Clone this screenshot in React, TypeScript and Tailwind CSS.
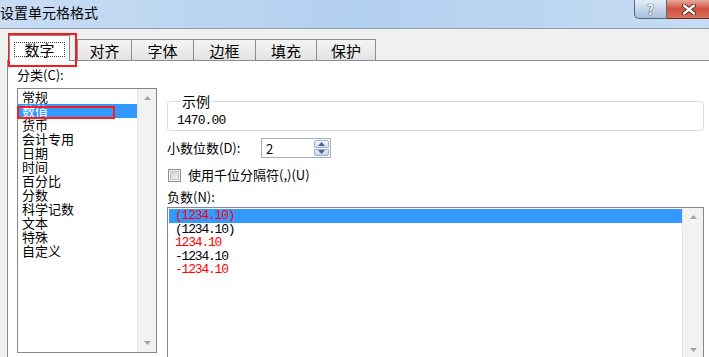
const FONT = "font-['Noto_Sans_CJK_SC','Liberation_Sans',sans-serif]";
const MONO = "font-['Liberation_Mono','Noto_Sans_CJK_SC',monospace]";

const categories = ["常规", "数值", "货币", "会计专用", "日期", "时间", "百分比", "分数", "科学记数", "文本", "特殊", "自定义"];

const negatives = [
  { text: "(1234.10)", red: true },
  { text: "(1234.10)", red: false },
  { text: "1234.10", red: true },
  { text: "-1234.10", red: false },
  { text: "-1234.10", red: true },
];

const tabs = [
  { label: "对齐", w: "w-[54px]" },
  { label: "字体", w: "w-[62px]" },
  { label: "边框", w: "w-[62px]" },
  { label: "填充", w: "w-[61px]" },
  { label: "保护", w: "w-[60px]" },
];

function Arrow({ up }: { up?: boolean }) {
  return (
    <svg width="7" height="4" viewBox="0 0 7 4" className="block">
      <path d={up ? "M0 4 L3.5 0 L7 4 Z" : "M0 0 L3.5 4 L7 0 Z"} fill="#a3a3a3" />
    </svg>
  );
}

function ScrollBar({ w }: { w: string }) {
  return (
    <div className={`${w} flex flex-col items-center justify-between border-l border-[#e6e6e6] bg-[#f2f2f2] py-[7px]`}>
      <Arrow up />
      <Arrow />
    </div>
  );
}

export default function App() {
  return (
    <div className={`relative flex h-[357px] w-[709px] flex-col overflow-hidden bg-[#f0f0f0] text-black ${FONT}`}>
      {/* title bar */}
      <div className="flex h-[29px] shrink-0 items-start justify-between border-b border-[#8d9cad] bg-linear-to-r from-[#c8ddf4] via-[#b2d0ef] to-[#c6dcf4]">
        <div className="pt-[3px] text-[14px] leading-[18px]">设置单元格格式</div>
        <div className="mr-[-2px] flex">
          <div className="flex h-[19px] w-[33px] items-center justify-center rounded-bl-[5px] border border-t-0 border-[#56677c] bg-linear-to-b from-[#e4eef8] to-[#a9c0d9]">
            <span className="text-[14px] leading-none font-bold text-[#f4f7fb] [text-shadow:0_0_1px_#333,0_0_1px_#333]">?</span>
          </div>
          <div className="flex h-[19px] w-[44px] items-center justify-center border border-t-0 border-l-0 border-[#6b2a22] bg-linear-to-b from-[#e9a89d] via-[#cf4f3e] to-[#d9735f]">
            <svg width="14" height="11" viewBox="0 0 14 11">
              <path d="M2 1.5 L12 9.5 M12 1.5 L2 9.5" stroke="#3a1a16" strokeWidth="4" strokeLinecap="round" />
              <path d="M2 1.5 L12 9.5 M12 1.5 L2 9.5" stroke="#ffffff" strokeWidth="2.4" strokeLinecap="round" />
            </svg>
          </div>
        </div>
      </div>

      {/* tab strip */}
      <div className="flex h-[31px] shrink-0 items-end pl-[9px]">
        <div className="relative z-10 mb-[-1px] flex h-[26px] w-[61px] items-start justify-center border border-b-0 border-[#898c95] bg-white pt-[6px]">
          <div className="border border-dotted border-[#444] px-[9px] text-[15px] leading-[13px]">数字</div>
        </div>
        <div className="ml-[7px] flex">
          {tabs.map((t, i) => (
            <div
              key={t.label}
              className={`${t.w} flex h-[21px] items-center justify-center border-t border-l border-[#898c95] bg-linear-to-b from-[#f4f4f4] to-[#e3e3e3] text-[15px] leading-none ${
                i === tabs.length - 1 ? "border-r" : ""
              }`}
            >
              {t.label}
            </div>
          ))}
        </div>
      </div>

      {/* content */}
      <div className="ml-[7px] flex flex-1 border-t border-l border-[#898c95] bg-white pt-[6px]">
        {/* category column */}
        <div className="flex flex-col pl-[9px]">
          <div className="mb-[5px] text-[13px] leading-[16px]">分类(C):</div>
          <div className="flex h-[265px] w-[140px] border border-[#828790] bg-white">
            <div className="flex-1 pt-[1px]">
              {categories.map((c, i) => (
                <div
                  key={c}
                  className={`h-[14px] pl-[4px] text-[13px] leading-[14px] whitespace-nowrap ${
                    i === 1 ? "bg-[#3399ff] text-white" : ""
                  }`}
                >
                  {c}
                </div>
              ))}
            </div>
            <ScrollBar w="w-[19px]" />
          </div>
        </div>

        {/* options column */}
        <div className="ml-[10px] flex w-[537px] flex-col pt-[26px]">
          <fieldset className="rounded-[3px] border border-[#d5dfe5] px-[9px] pb-[2px]">
            <legend className="ml-[4px] px-[1px] text-[14px] leading-[16px]">示例</legend>
            <div className={`pt-[5px] text-[13px] leading-[14px] tracking-[-0.9px] ${MONO}`}>1470.00</div>
          </fieldset>

          <div className="mt-[7px] flex h-[20px] items-center">
            <div className="w-[94px] text-[13px] leading-[16px]">小数位数(D):</div>
            <div className="flex h-[20px] w-[70px] items-center border border-[#abadb3] bg-white">
              <span className="flex-1 pl-[4px] text-[13px] leading-none">2</span>
              <div className="mr-[1px] flex h-[16px] w-[15px] flex-col gap-[1px]">
                <div className="flex flex-1 items-center justify-center rounded-t-[2px] border border-[#9eb3cc] bg-linear-to-b from-[#f1f6fc] to-[#cfdeef]">
                  <svg width="7" height="4" viewBox="0 0 7 4"><path d="M0 4 L3.5 0 L7 4 Z" fill="#4d6185" /></svg>
                </div>
                <div className="flex flex-1 items-center justify-center rounded-b-[2px] border border-[#9eb3cc] bg-linear-to-b from-[#e4edf8] to-[#c4d6ec]">
                  <svg width="7" height="4" viewBox="0 0 7 4"><path d="M0 0 L3.5 4 L7 0 Z" fill="#4d6185" /></svg>
                </div>
              </div>
            </div>
          </div>

          <div className="mt-[8px] flex h-[18px] items-center pl-[1px]">
            <div className="flex h-[13px] w-[13px] items-center justify-center border border-[#8e8f8f] bg-[#f4f4f4]">
              <div className="h-[9px] w-[9px] border border-[#c6c6c6] bg-linear-to-br from-[#d2d2d2] to-[#f2f2f2]" />
            </div>
            <span className="ml-[7px] text-[13px] leading-[16px]">使用千位分隔符(,)(U)</span>
          </div>

          <div className="mt-[5px] text-[13px] leading-[16px]">负数(N):</div>
          <div className="mt-[2px] flex h-[153px] border border-[#828790] bg-white">
            <div className="flex-1 pt-[1px]">
              {negatives.map((n, i) => (
                <div
                  key={i}
                  className={`ml-[1px] h-[13.6px] pl-[6px] text-[13px] leading-[13.6px] tracking-[-1.2px] ${MONO} ${
                    n.red ? "text-[#ff0000]" : "text-black"
                  } ${i === 0 ? "bg-[#3399ff]" : ""}`}
                >
                  {n.text}
                </div>
              ))}
            </div>
            <ScrollBar w="w-[21px]" />
          </div>
        </div>
      </div>

      {/* annotation boxes */}
      <div className="pointer-events-none absolute top-[33px] left-[8px] h-[34px] w-[69px] border-2 border-[#ff1a1a]" />
      <div className="pointer-events-none absolute top-[106px] left-[17px] h-[13px] w-[98px] border-2 border-[#ff1a1a]" />
    </div>
  );
}
